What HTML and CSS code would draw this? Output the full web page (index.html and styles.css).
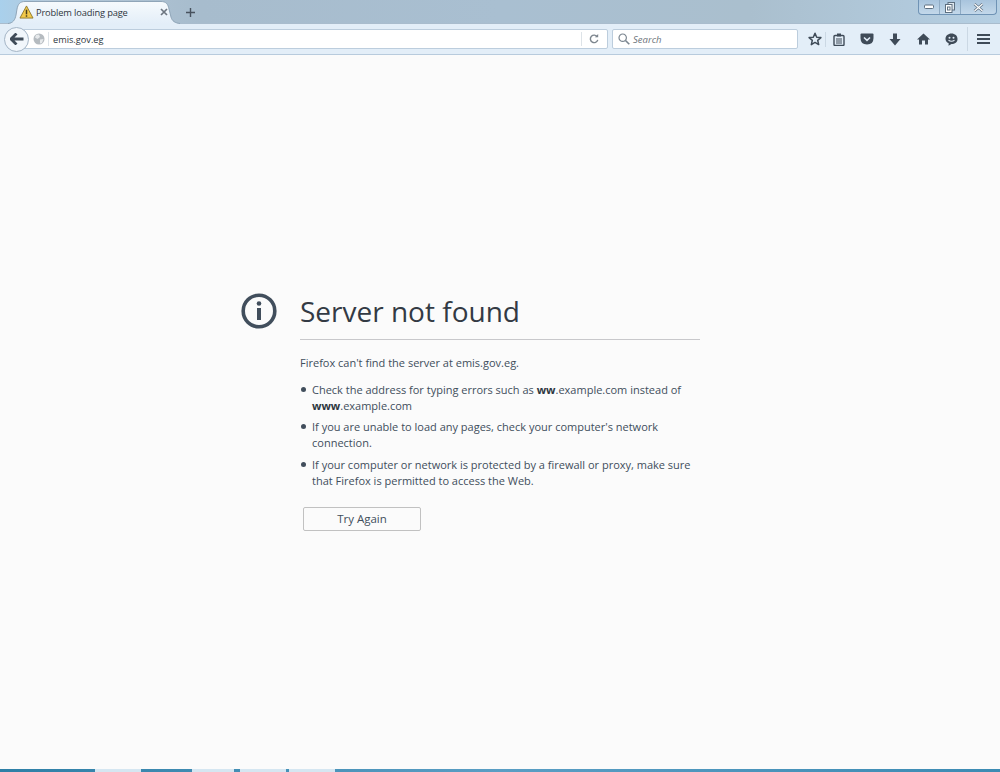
FILE: index.html
```html
<!DOCTYPE html>
<html lang="en">
<head>
    <meta charset="UTF-8">
    <title>Problem loading page</title>
    <link rel="stylesheet" href="styles.css">
</head>
<body>

<!-- tab strip -->
<div class="tabbar">
    <div class="tab">
        <svg class="tab-shape" width="172" height="24" viewBox="0 0 172 24">
            <defs>
                <linearGradient id="tab-fill" x1="0" y1="0" x2="0" y2="1">
                    <stop offset="0" stop-color="#f6fafd"/>
                    <stop offset="1" stop-color="#e3eef8"/>
                </linearGradient>
            </defs>
            <path d="M0 24 C5 23 7 20 8 15 L9 9 C10 4 12 1.500 17 1.500 H153 C158 1.500 160 4 161 9 L163 17 C164 21 167 23 172 24 Z" fill="url(#tab-fill)"/>
            <path d="M0 23.500 C5 23 7 20 8 15 L9 9 C10 4 12 1.500 17 1.500 H153 C158 1.500 160 4 161 9 L163 17 C164 21 167 23 172 23.500" fill="none" stroke="#8fa5b8"/>
        </svg>
        <svg class="tab-warn" width="15" height="14" viewBox="0 0 16 15">
            <path d="M8 1 L15 14 L1 14 Z" fill="#f2c94a" stroke="#8f7a2e" stroke-width="1" stroke-linejoin="round"/>
            <rect x="7.2" y="5" width="1.6" height="5" fill="#4a3f1c"/>
            <rect x="7.2" y="11" width="1.6" height="1.6" fill="#4a3f1c"/>
        </svg>
        <span class="tab-title">Problem loading page</span>
        <svg class="tab-close" width="8" height="8" viewBox="0 0 8 8">
            <path d="M1 1 L7 7 M7 1 L1 7" stroke="#6d7680" stroke-width="1.7"/>
        </svg>
    </div>
    <svg class="new-tab" width="9" height="9" viewBox="0 0 9 9">
        <path d="M4.5 0 V9 M0 4.5 H9" stroke="#48525e" stroke-width="1.4"/>
    </svg>
    <div class="window-btns">
        <div class="win-btn win-min">
            <svg width="11" height="6" viewBox="0 0 11 6"><rect x="0.5" y="1" width="9" height="3.5" rx="1" fill="#fff" stroke="#5d6f80"/></svg>
        </div>
        <div class="win-btn win-max">
            <svg width="10" height="11" viewBox="0 0 10 11">
                <rect x="3" y="0.5" width="6.5" height="7.5" fill="#dfe7ee" stroke="#5d6f80"/>
                <rect x="0.5" y="2.5" width="6.5" height="8" fill="#fff" stroke="#5d6f80"/>
                <rect x="2.5" y="5" width="2.5" height="3" fill="none" stroke="#5d6f80"/>
            </svg>
        </div>
        <div class="win-btn win-close">
            <svg width="11" height="9" viewBox="0 0 11 9"><path d="M1.5 1 L9.5 8 M9.5 1 L1.5 8" stroke="#5d6f80" stroke-width="2.6"/><path d="M1.5 1 L9.5 8 M9.5 1 L1.5 8" stroke="#fff" stroke-width="1.2"/></svg>
        </div>
    </div>
</div>

<!-- nav toolbar -->
<div class="toolbar">
    <div class="back-btn">
        <svg width="14" height="12" viewBox="0 0 14 12">
            <path d="M6.5 0.5 L1 6 L6.5 11.500 M1.500 6 H13.500" fill="none" stroke="#3f4b58" stroke-width="2.800"/>
        </svg>
    </div>
    <div class="urlbar">
        <svg class="globe" width="12" height="12" viewBox="0 0 12 12">
            <circle cx="6" cy="6" r="5.500" fill="#b5bbc0"/>
            <path d="M3 2 L6 1.500 L7 4 L4.500 6 L2 4.500 Z M7 6.500 L10.500 6 L9 10 L7 10.500 Z" fill="#e6e9eb"/>
        </svg>
        <span class="url-sep"></span>
        <span class="url-text">emis.gov.eg</span>
        <span class="url-sep url-sep-right"></span>
        <svg class="reload" width="10" height="10" viewBox="0 0 12 12">
            <path d="M10 3.500 A4.500 4.500 0 1 0 10.500 7" fill="none" stroke="#7d868e" stroke-width="1.700"/>
            <path d="M7 3.800 H11 V0 Z" fill="#7d868e"/>
        </svg>
    </div>
    <div class="searchbar">
        <svg width="12" height="12" viewBox="0 0 12 12">
            <circle cx="4.700" cy="4.700" r="3.700" fill="none" stroke="#7b8690" stroke-width="1.200"/>
            <path d="M7.500 7.500 L11.300 11.300" stroke="#7b8690" stroke-width="1.600"/>
        </svg>
        <span class="search-text">Search</span>
    </div>
    <div class="tools">
        <svg class="tool-star" width="14" height="14" viewBox="0 0 14 14">
            <path d="M7 1.300 L8.700 5.200 L12.900 5.600 L9.700 8.400 L10.700 12.600 L7 10.400 L3.300 12.600 L4.300 8.400 L1.100 5.600 L5.300 5.200 Z" fill="none" stroke="#3f4b58" stroke-width="1.500" stroke-linejoin="round"/>
        </svg>
        <span class="tool-sep"></span>
        <svg class="tool-clip" width="12" height="13" viewBox="0 0 12 13">
            <rect x="1" y="2.500" width="10" height="10" rx="1" fill="none" stroke="#3f4b58" stroke-width="1.400"/>
            <rect x="4" y="0.500" width="4" height="3" fill="#3f4b58"/>
            <path d="M3 6 H9 M3 8 H9 M3 10 H9" stroke="#3f4b58"/>
        </svg>
        <svg class="tool-pocket" width="14" height="12" viewBox="0 0 14 12">
            <path d="M0.500 1.500 Q0.500 0.500 1.500 0.500 H12.500 Q13.500 0.500 13.500 1.500 V5 Q13.500 11.500 7 11.500 Q0.500 11.500 0.500 5 Z" fill="#3f4b58"/>
            <path d="M4 4.500 L7 7.300 L10 4.500" fill="none" stroke="#dfeaf5" stroke-width="1.600"/>
        </svg>
        <svg class="tool-down" width="12" height="13" viewBox="0 0 12 13">
            <path d="M4 0.500 H8 V6 H11.500 L6 12.500 L0.500 6 H4 Z" fill="#3f4b58"/>
        </svg>
        <svg class="tool-home" width="13" height="12" viewBox="0 0 13 12">
            <path d="M6.500 0.500 L13 6.500 H11 V11.500 H8 V7.500 H5 V11.500 H2 V6.500 H0 Z" fill="#3f4b58"/>
        </svg>
        <svg class="tool-chat" width="13" height="13" viewBox="0 0 13 13">
            <path d="M6.500 0.500 C10 0.500 12.500 2.800 12.500 6 C12.500 9.200 10 11 6.500 11 L3.500 12.700 L3.700 10.300 C1.600 9.300 0.500 7.800 0.500 6 C0.500 2.800 3 0.500 6.500 0.500 Z" fill="#3f4b58"/>
            <circle cx="4.500" cy="4.800" r="1" fill="#dfeaf5"/>
            <circle cx="8.500" cy="4.800" r="1" fill="#dfeaf5"/>
            <path d="M3.500 7.300 Q6.500 9.300 9.500 7.300" fill="none" stroke="#dfeaf5" stroke-width="1.100"/>
        </svg>
        <span class="tool-sep tool-sep-menu"></span>
        <div class="menu-btn"><span></span><span></span><span></span></div>
    </div>
</div>

<!-- error page -->
<div class="page">
    <div class="error">
        <svg class="error-icon" width="36" height="36" viewBox="0 0 36 36">
            <circle cx="18" cy="18" r="15.800" fill="none" stroke="#414e5c" stroke-width="3.600"/>
            <circle cx="18" cy="10.500" r="2.300" fill="#414e5c"/>
            <rect x="16" y="15" width="4" height="12" fill="#414e5c"/>
        </svg>
        <div class="error-body">
            <h1>Server not found</h1>
            <p class="lead">Firefox can't find the server at emis.gov.eg.</p>
            <ul>
                <li><span>Check the address for typing errors such as <b>ww</b>.example.com instead of <b>www</b>.example.com</span></li>
                <li><span>If you are unable to load any pages, check your computer's network connection.</span></li>
                <li><span>If your computer or network is protected by a firewall or proxy, make sure that Firefox is permitted to access the Web.</span></li>
            </ul>
            <button class="retry">Try Again</button>
        </div>
    </div>
</div>

<!-- windows taskbar, mostly cut off -->
<div class="taskbar">
    <span class="task-item task-a"></span>
    <span class="task-item task-b"></span>
    <span class="task-item task-c"></span>
    <span class="task-item task-d"></span>
</div>

</body>
</html>
```

FILE: styles.css
```css
html, body {
    height: 100%;
}

body {
    margin: 0;
    display: flex;
    flex-direction: column;
    overflow: hidden;
    font-family: "Open Sans", "Noto Sans", sans-serif;
    background-color: #fbfbfb;
}

/* tab strip */
.tabbar {
    position: relative;
    z-index: 1;
    height: 23px;
    display: flex;
    align-items: flex-start;
    background: linear-gradient(90deg, #a9d0ec 0%, #b5c9d9 5%, #a7bccd 20%, #a9bfd1 50%, #aabfce 75%, #b5cfe3 100%);
    flex-shrink: 0;
}

.tab {
    position: relative;
    z-index: 0;
    width: 172px;
    height: 23px;
    margin-left: 8px;
    padding: 1px 12px 0 11px;
    box-sizing: border-box;
    display: flex;
    align-items: center;
}

.tab-shape {
    position: absolute;
    left: 0;
    top: 0;
    z-index: -1;
}

.tab-warn {
    margin-right: 2px;
}

.tab-title {
    flex: 1;
    font-size: 9.3px;
    letter-spacing: -0.15px;
    color: #2e3640;
    white-space: nowrap;
}

.new-tab {
    margin: 8px 0 0 6px;
}

.window-btns {
    margin-left: auto;
    margin-right: 3px;
    height: 14px;
    display: flex;
    border: 1px solid #6f93b5;
    border-top: none;
    border-radius: 0 0 4px 4px;
    background: linear-gradient(#a8c4dd, #c3d8ea);
}

.win-btn {
    display: flex;
    align-items: center;
    justify-content: center;
    border-right: 1px solid #8fabc4;
}

.win-min, .win-max {
    width: 20px;
}

.win-close {
    width: 35px;
    border-right: none;
}

/* nav toolbar */
.toolbar {
    height: 32px;
    box-sizing: border-box;
    display: flex;
    align-items: center;
    padding-left: 4px;
    background: #e3eef8;
    border-top: 1px solid #a9bccd;
    border-bottom: 1px solid #b8cbdd;
    flex-shrink: 0;
}

.back-btn {
    width: 23px;
    height: 23px;
    display: flex;
    align-items: center;
    justify-content: center;
    background: #f1f6fb;
    border: 1px solid #a4b5c6;
    border-radius: 50%;
    z-index: 1;
}

.urlbar {
    width: 585px;
    height: 20px;
    margin-left: -6px;
    padding-left: 9px;
    box-sizing: border-box;
    display: flex;
    align-items: center;
    background: #fff;
    border: 1px solid #bccddd;
    border-radius: 0 2px 2px 0;
}

.globe {
    flex-shrink: 0;
}

.url-sep {
    width: 1px;
    height: 14px;
    margin: 0 4px 0 3px;
    background: #dde3e8;
}

.url-text {
    flex: 1;
    font-size: 9.2px;
    color: #2e3640;
}

.url-sep-right {
    margin: 0 7px 0 0;
}

.reload {
    margin-right: 8px;
}

.searchbar {
    width: 186px;
    height: 20px;
    margin-left: 4px;
    padding-left: 5px;
    box-sizing: border-box;
    display: flex;
    align-items: center;
    background: #fff;
    border: 1px solid #bccddd;
    border-radius: 2px;
}

.search-text {
    margin-left: 3px;
    font-size: 9.5px;
    font-style: italic;
    color: #6b737a;
}

.tools {
    flex: 1;
    display: flex;
    align-items: center;
    padding-left: 10px;
}

.tool-sep {
    width: 1px;
    height: 15px;
    margin: 0 7px 0 3px;
    background: #cbd8e4;
}

.tool-pocket {
    margin-left: 15px;
}

.tool-down {
    margin-left: 15px;
}

.tool-home {
    margin-left: 16px;
}

.tool-chat {
    margin-left: 15px;
}

.tool-sep-menu {
    height: 24px;
    margin: 0 9px 0 9px;
}

.menu-btn {
    display: flex;
    flex-direction: column;
    gap: 2px;
}

.menu-btn span {
    width: 13px;
    height: 2px;
    background: #3f4b58;
}

/* error page */
.page {
    flex: 1;
    padding: 238px 0 0 241px;
    background-color: #fbfbfb;
}

.error {
    display: flex;
    color: #414e5c;
}

.error-icon {
    flex-shrink: 0;
    margin-right: 23px;
}

.error-body {
    width: 400px;
}

h1 {
    margin-top: -1px;
    margin-bottom: 0;
    padding-bottom: 9px;
    border-bottom: 1px solid #c8c8cb;
    font-size: 28px;
    line-height: 38px;
    font-weight: 400;
    color: #333a44;
}

.lead {
    margin: 15px 0 0;
    font-size: 11px;
    line-height: 16px;
}

ul {
    margin: 11px 0 0;
    padding: 0;
    list-style: none;
}

li {
    display: flex;
    margin-bottom: 5.4px;
    font-size: 11px;
    line-height: 16px;
}

li::before {
    content: "";
    flex-shrink: 0;
    width: 5px;
    height: 5px;
    margin: 5px 6px 0 1px;
    border-radius: 50%;
    background: #414e5c;
}

b {
    font-weight: 700;
    color: #2e3640;
}

.retry {
    width: 118px;
    height: 24px;
    margin: 18px 0 0 3px;
    padding: 0 0 1px;
    display: block;
    font-family: inherit;
    font-size: 11.5px;
    color: #414e5c;
    background: #fbfbfb;
    border: 1px solid #c1c1c1;
    border-radius: 2px;
}

/* windows taskbar */
.taskbar {
    height: 3px;
    display: flex;
    padding-left: 95px;
    background: linear-gradient(90deg, #2e7fa6, #5a9ec4 50%, #3c8bb3);
    flex-shrink: 0;
}

.task-item {
    height: 3px;
    background: #d5e6f1;
}

.task-a {
    width: 46px;
}

.task-b {
    width: 42px;
    margin-left: 51px;
}

.task-c {
    width: 46px;
    margin-left: 6px;
}

.task-d {
    width: 46px;
    margin-left: 3px;
}
```
